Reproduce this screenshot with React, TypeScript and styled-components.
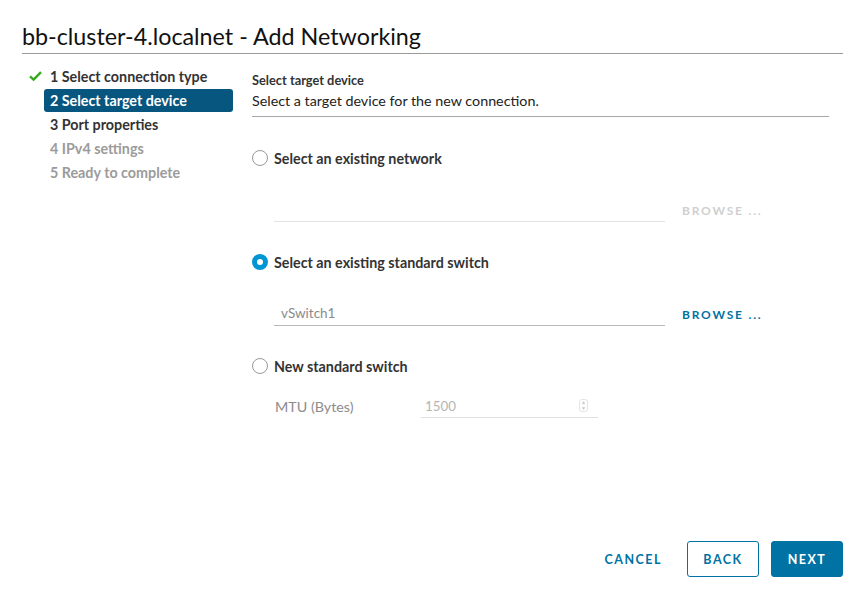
import React, { useState } from 'react';
import styled, { createGlobalStyle } from 'styled-components';

const GlobalStyle = createGlobalStyle`
    html, body {
        margin: 0;
        padding: 0;
        background: #fff;
    }
    body {
        font-family: 'Lato', 'Liberation Sans', sans-serif;
        color: #313131;
    }
`;

const steps = [
    { label: '1 Select connection type', state: 'done' },
    { label: '2 Select target device', state: 'active' },
    { label: '3 Port properties', state: 'open' },
    { label: '4 IPv4 settings', state: 'disabled' },
    { label: '5 Ready to complete', state: 'disabled' },
];

const Page = styled.div`
    width: 855px;
    height: 593px;
    box-sizing: border-box;
    padding: 22px 12px 16px 22px;
    display: flex;
    flex-direction: column;
`;

const Title = styled.h1`
    margin: 0;
    font-size: 23.3px;
    font-weight: 400;
    line-height: 28px;
    color: #111;
    padding-bottom: 3px;
    border-bottom: 1px solid #9a9a9a;
`;

const Body = styled.div`
    flex: 1;
    display: flex;
`;

const Nav = styled.nav`
    width: 211px;
    padding-top: 10px;
    display: flex;
    flex-direction: column;
`;

const NavRow = styled.div`
    display: flex;
    align-items: center;
    height: 24px;
`;

const IconSlot = styled.span`
    width: 22px;
    display: flex;
    justify-content: flex-end;
    padding-right: 2px;
    box-sizing: border-box;
`;

const NavItem = styled.div<{ $state: string }>`
    flex: 1;
    height: 23px;
    line-height: 23px;
    padding-left: 6px;
    border-radius: 3px;
    font-size: 14.3px;
    font-weight: 700;
    background: ${p => (p.$state === 'active' ? '#07567f' : 'transparent')};
    color: ${p =>
        p.$state === 'active' ? '#fff' : p.$state === 'disabled' ? '#9b9b9b' : '#333'};
`;

const Content = styled.section`
    flex: 1;
    margin-left: 19px;
    padding-top: 16px;
    padding-right: 14px;
    display: flex;
    flex-direction: column;
`;

const Header = styled.header`
    border-bottom: 1px solid #a8a8a8;
    padding-bottom: 5px;
`;

const Heading = styled.div`
    font-size: 12.8px;
    font-weight: 700;
    line-height: 20px;
    color: #333;
`;

const Description = styled.div`
    font-size: 14.3px;
    line-height: 21px;
    color: #222;
`;

const Options = styled.div`
    display: flex;
    flex-direction: column;
    padding-top: 31px;
`;

const RadioRow = styled.label<{ $first?: boolean }>`
    display: flex;
    align-items: center;
    height: 20px;
    margin-top: ${p => (p.$first ? '0' : '30px')};
    font-size: 14.3px;
    font-weight: 700;
    color: #333;
    cursor: pointer;
`;

const RadioCircle = styled.span<{ $checked: boolean }>`
    width: 16px;
    height: 16px;
    box-sizing: border-box;
    border-radius: 50%;
    margin-right: 6px;
    border: ${p => (p.$checked ? '5.5px solid #0095d3' : '1px solid #9a9a9a')};
    background: #fff;
`;

const FieldRow = styled.div`
    display: flex;
    align-items: center;
    margin-top: 30px;
    padding-left: 22px;
`;

const TextField = styled.div<{ $disabled?: boolean }>`
    width: 391px;
    height: 24px;
    box-sizing: border-box;
    padding: 0 7px;
    line-height: 22px;
    font-size: 13.5px;
    color: #8a8a8a;
    border-bottom: 1px solid ${p => (p.$disabled ? '#e2e2e2' : '#b9b9b9')};
`;

const LinkButton = styled.button<{ $disabled?: boolean }>`
    border: none;
    background: none;
    padding: 0;
    margin-left: 17px;
    font-family: inherit;
    font-size: 12px;
    font-weight: 700;
    letter-spacing: 1.8px;
    color: ${p => (p.$disabled ? '#cfcfcf' : '#0072a3')};
    cursor: ${p => (p.$disabled ? 'default' : 'pointer')};
`;

const MtuRow = styled.div`
    display: flex;
    align-items: center;
    margin-top: 18px;
    padding-left: 23px;
`;

const MtuLabel = styled.span`
    width: 146px;
    font-size: 14.3px;
    color: #8c8c8c;
`;

const NumberField = styled.div`
    width: 177px;
    height: 24px;
    box-sizing: border-box;
    padding: 0 4px;
    display: flex;
    align-items: center;
    justify-content: space-between;
    font-size: 13.3px;
    color: #b5b5b5;
    border-bottom: 1px solid #e0e0e0;
`;

const Spinner = styled.span`
    width: 7px;
    height: 11px;
    margin-right: 6px;
    border: 1px solid #e4e4e4;
    border-radius: 3px;
    display: flex;
    flex-direction: column;
    align-items: center;
    justify-content: space-around;
    font-size: 5px;
    line-height: 5px;
    color: #c8c8c8;
`;

const Footer = styled.footer`
    display: flex;
    justify-content: flex-end;
    align-items: center;
    gap: 12px;
`;

const Button = styled.button<{ $variant: 'flat' | 'outline' | 'solid' }>`
    height: 36px;
    min-width: 72px;
    box-sizing: border-box;
    padding: 0 12px;
    border-radius: 3px;
    font-family: inherit;
    font-size: 12.5px;
    font-weight: 700;
    letter-spacing: 1.5px;
    cursor: pointer;
    border: 1px solid ${p => (p.$variant === 'flat' ? 'transparent' : '#0072a3')};
    background: ${p => (p.$variant === 'solid' ? '#0072a3' : '#fff')};
    color: ${p => (p.$variant === 'solid' ? '#fff' : '#0072a3')};
`;

const Check = () => (
    <svg width="13" height="10" viewBox="0 0 13 10">
        <path d="M1 5.4 L4.6 8.6 L12 1.2" fill="none" stroke="#34ab1c" strokeWidth="2.4" />
    </svg>
);

const options = [
    'Select an existing network',
    'Select an existing standard switch',
    'New standard switch',
];

const App = () => {
    const [selected, setSelected] = useState(1);

    return (
        <Page>
            <GlobalStyle />
            <Title>bb-cluster-4.localnet - Add Networking</Title>
            <Body>
                <Nav>
                    {steps.map(step => (
                        <NavRow key={step.label}>
                            <IconSlot>{step.state === 'done' && <Check />}</IconSlot>
                            <NavItem $state={step.state}>{step.label}</NavItem>
                        </NavRow>
                    ))}
                </Nav>
                <Content>
                    <Header>
                        <Heading>Select target device</Heading>
                        <Description>Select a target device for the new connection.</Description>
                    </Header>
                    <Options>
                        <RadioRow $first onClick={() => setSelected(0)}>
                            <RadioCircle $checked={selected === 0} />
                            {options[0]}
                        </RadioRow>
                        <FieldRow>
                            <TextField $disabled />
                            <LinkButton $disabled>BROWSE ...</LinkButton>
                        </FieldRow>

                        <RadioRow onClick={() => setSelected(1)}>
                            <RadioCircle $checked={selected === 1} />
                            {options[1]}
                        </RadioRow>
                        <FieldRow>
                            <TextField>vSwitch1</TextField>
                            <LinkButton>BROWSE ...</LinkButton>
                        </FieldRow>

                        <RadioRow onClick={() => setSelected(2)}>
                            <RadioCircle $checked={selected === 2} />
                            {options[2]}
                        </RadioRow>
                        <MtuRow>
                            <MtuLabel>MTU (Bytes)</MtuLabel>
                            <NumberField>
                                1500
                                <Spinner>
                                    <span>▲</span>
                                    <span>▼</span>
                                </Spinner>
                            </NumberField>
                        </MtuRow>
                    </Options>
                </Content>
            </Body>
            <Footer>
                <Button $variant="flat">CANCEL</Button>
                <Button $variant="outline">BACK</Button>
                <Button $variant="solid">NEXT</Button>
            </Footer>
        </Page>
    );
};

export default App;
